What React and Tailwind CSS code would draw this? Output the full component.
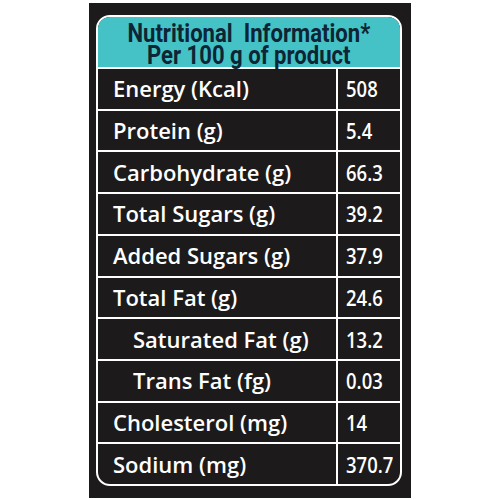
const rows = [
  { label: "Energy (Kcal)", value: "508" },
  { label: "Protein (g)", value: "5.4" },
  { label: "Carbohydrate (g)", value: "66.3" },
  { label: "Total Sugars (g)", value: "39.2" },
  { label: "Added Sugars (g)", value: "37.9" },
  { label: "Total Fat (g)", value: "24.6" },
  { label: "Saturated Fat (g)", value: "13.2", indent: true },
  { label: "Trans Fat (fg)", value: "0.03", indent: true },
  { label: "Cholesterol (mg)", value: "14" },
  { label: "Sodium (mg)", value: "370.7" },
];

export default function App() {
  return (
    <div className="w-[500px] h-[500px] bg-white flex justify-center">
      <div className="mt-[3px] w-[322px] h-[495px] bg-[#1c1a1a] pl-[7px] pr-[9px] pt-[12px]">
        <div className="h-[471px] border-2 border-white rounded-[14px] overflow-hidden flex flex-col">
          {/* header */}
          <div className="h-[50px] shrink-0 bg-[#45c2c5] flex flex-col items-center justify-center text-[#0d2535] font-['Roboto','Liberation_Sans',sans-serif] font-bold leading-[22px] pt-[3px]">
            <span className="text-[26px] scale-x-[0.85] whitespace-nowrap">
              Nutritional&nbsp; Information*
            </span>
            <span className="text-[26px] scale-x-[0.85] whitespace-nowrap">
              Per 100 g of product
            </span>
          </div>

          {rows.map((row) => (
            <div key={row.label} className="flex-1 flex border-t-2 border-white">
              <div
                className={`w-[238px] shrink-0 flex items-center text-white text-[22px] font-semibold font-['Open_Sans',sans-serif] ${
                  row.indent ? "pl-[35px]" : "pl-[15px]"
                }`}
              >
                {row.label}
              </div>
              <div className="flex-1 border-l-2 border-white flex items-center pl-[8px] text-white text-[22px] font-semibold font-['Open_Sans',sans-serif]">
                <span className="inline-block scale-x-[0.84] origin-left">{row.value}</span>
              </div>
            </div>
          ))}
        </div>
      </div>
    </div>
  );
}
